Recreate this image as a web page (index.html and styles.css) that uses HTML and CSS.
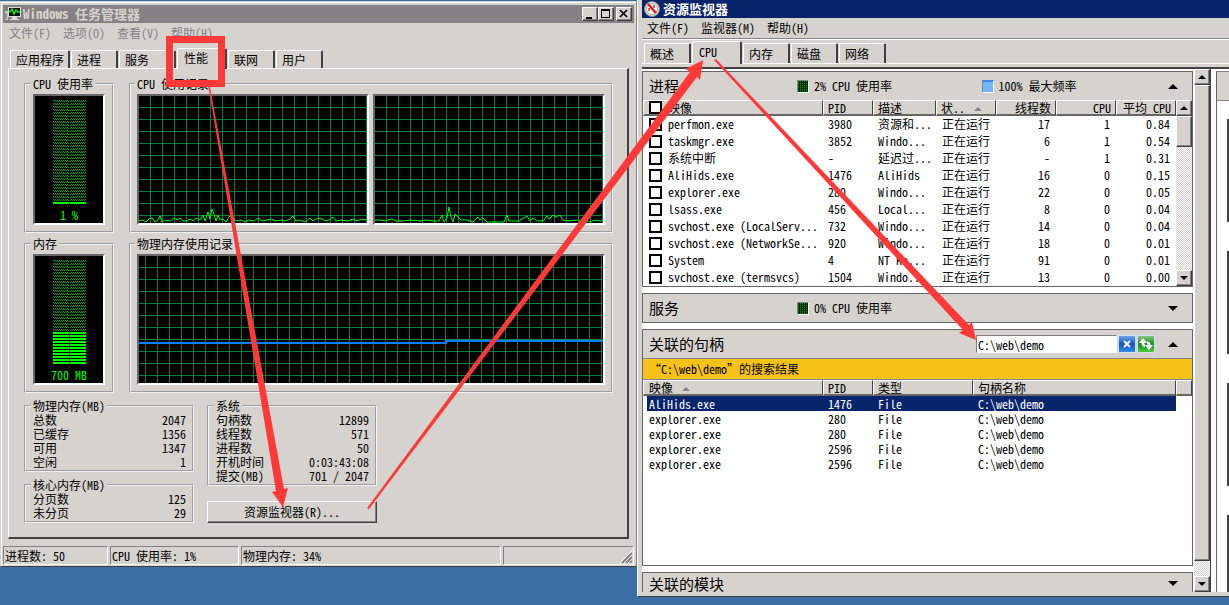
FILE: index.html
```html
<!DOCTYPE html>
<html lang="zh-CN">
<head>
<meta charset="utf-8">
<title>资源监视器</title>
<link rel="stylesheet" href="styles.css">
</head>
<body>
<main class="desktop">
  <section class="window taskmgr">
    <header class="titlebar inactive">
      <svg class="app-icon" width="16" height="16" viewBox="0 0 16 16"><path d="M0 5h3v9H0z" fill="#c8c8c0"/><path d="M1 7v6" stroke="#666"/><rect x="3.500" y="1.500" width="12" height="9" fill="#111" stroke="#ddd"/><path d="M4 6l2-1 1-2 2 5 2-4 2 2h2" fill="none" stroke="#0e0" stroke-width="1.500"/><path d="M7 11h5v2h2v1H5v-1h2z" fill="#ddd"/></svg>
      <h1>Windows 任务管理器</h1>
      <div class="win-buttons">
        <button aria-label="最小化"><svg width="12" height="12"><path d="M2 9h6v2H2z"/></svg></button><button aria-label="最大化"><svg width="12" height="12"><path d="M1 1h9v9H1zM2 3v6h7V3z" fill-rule="evenodd"/></svg></button><button class="close" aria-label="关闭"><svg width="12" height="12"><path d="M2 2l7 7M9 2l-7 7" stroke="#000" stroke-width="1.700"/></svg></button>
      </div>
    </header>
    <nav class="menu muted"><a>文件(F)</a><a>选项(O)</a><a>查看(V)</a><a>帮助(H)</a></nav>
    <div class="tabs">
      <button class="tab w60">应用程序</button><button class="tab w47">进程</button><button class="tab w57">服务</button><button class="tab w50 selected">性能</button><button class="tab w47">联网</button><button class="tab w47">用户</button>
    </div>
    <div class="panel">
      <div class="usage">
        <fieldset class="meter-box"><legend>CPU 使用率</legend>
          <div class="meter">
            <svg width="33" height="105" shape-rendering="crispEdges">
              <defs><pattern id="dim" width="2" height="3" patternUnits="userSpaceOnUse"><path d="M0 0h1v1H0zM1 1h1v1H1z" fill="#00a800"/></pattern>
              <pattern id="lit" width="3" height="3" patternUnits="userSpaceOnUse"><path d="M0 0h3v2H0z" fill="#0f0"/></pattern></defs>
              <path d="M0 0h16v101H0zM17 0h16v101H17z" fill="url(#dim)"/><path d="M0 102h16v2H0zM17 102h16v2H17z" fill="#0f0"/>
            </svg><span>1 %</span>
          </div>
        </fieldset>
        <fieldset class="chart-box"><legend>CPU 使用记录</legend>
          <div class="charts">
            <svg class="chart" height="127">
              <defs><pattern id="grid" width="12" height="12" patternUnits="userSpaceOnUse" x="11" y="11"><path d="M0 0h12v1H1v11H0z" fill="#008040" shape-rendering="crispEdges"/></pattern></defs>
              <rect width="100%" height="100%" fill="url(#grid)"/>
              <polyline class="trace" points="0,125 4,124 7,126 10,123 13,122 16,126 19,124 21,120 23,126 27,124 31,125 35,122 38,124 41,122 44,125 48,125 51,123 54,125 57,122 61,124 64,119 66,125 69,116 71,123 73,113 75,118 77,125 79,119 81,124 84,123 87,126 90,121 93,118 95,123 98,125 102,124 106,126 110,124 115,125 119,122 123,125 128,124 132,123 137,125 142,124 146,125 151,123 154,120 157,125 161,124 166,126 171,122 174,125 179,122 183,123 186,125 190,124 194,121 197,125 202,124 208,125 214,123 218,125 223,123 228,124 232,124"/>
            </svg>
            <svg class="chart" height="127">
              <rect width="100%" height="100%" fill="url(#grid)"/>
              <polyline class="trace" points="0,124 6,124 9,125 13,124 17,123 21,125 29,125 35,124 45,125 52,124 58,125 64,125 67,119 69,126 72,122 74,111 76,121 78,126 80,118 83,121 86,124 92,124 98,126 103,121 105,124 108,122 112,126 129,126 132,119 134,125 143,125 147,123 152,120 155,125 158,122 162,125 168,125 172,120 174,123 178,119 181,121 185,119 188,124 194,125 201,124 210,125 214,126 220,124 225,125 232,124"/>
            </svg>
          </div>
        </fieldset>
        <fieldset class="meter-box"><legend>内存</legend>
          <div class="meter">
            <svg width="33" height="105" shape-rendering="crispEdges"><path d="M0 0h16v71H0zM17 0h16v71H17z" fill="url(#dim)"/><path d="M0 72h16v32H0zM17 72h16v32H17z" fill="url(#lit)"/></svg><span>700 MB</span>
          </div>
        </fieldset>
        <fieldset class="chart-box"><legend>物理内存使用记录</legend>
          <div class="charts">
            <svg class="chart" height="127">
              <defs><pattern id="grid2" width="12" height="12" patternUnits="userSpaceOnUse" x="6" y="11"><path d="M0 0h12v1H1v11H0z" fill="#008040" shape-rendering="crispEdges"/></pattern></defs>
              <rect width="100%" height="100%" fill="url(#grid2)"/>
              <polyline points="0,87 307,87 307,85 2000,85" fill="none" stroke="#0080ff" stroke-width="2" shape-rendering="crispEdges"/>
            </svg>
          </div>
        </fieldset>
      </div>
      <div class="stats">
        <div class="stat-col">
          <fieldset><legend>物理内存(MB)</legend><dl>
            <div><dt>总数</dt><dd>2047</dd></div><div><dt>已缓存</dt><dd>1356</dd></div><div><dt>可用</dt><dd>1347</dd></div><div><dt>空闲</dt><dd>1</dd></div></dl></fieldset>
          <fieldset><legend>核心内存(MB)</legend><dl><div><dt>分页数</dt><dd>125</dd></div><div><dt>未分页</dt><dd>29</dd></div></dl></fieldset>
        </div>
        <div class="stat-col wide-gap">
          <fieldset><legend>系统</legend><dl>
            <div><dt>句柄数</dt><dd>12899</dd></div><div><dt>线程数</dt><dd>571</dd></div><div><dt>进程数</dt><dd>50</dd></div><div><dt>开机时间</dt><dd>0:03:43:08</dd></div><div><dt>提交(MB)</dt><dd>701 / 2047</dd></div></dl></fieldset>
          <button class="push">资源监视器(R)...</button>
        </div>
      </div>
    </div>
    <footer class="status">
      <span>进程数: 50</span><span>CPU 使用率: 1%</span><span>物理内存: 34%</span>
      <span><svg width="12" height="12"><path d="M0 12L12 0M4 12l8-8M8 12l4-4" stroke="#fff" stroke-width="1"/><path d="M2 12L12 2M6 12l6-6M10 12l2-2" stroke="#848284" stroke-width="2"/></svg></span>
    </footer>
  </section>

  <section class="resmon">
    <header class="titlebar">
      <svg class="app-icon" width="16" height="16" viewBox="0 0 16 16"><circle cx="8" cy="8" r="7.500" fill="#ddd" stroke="#888"/><circle cx="8" cy="8" r="5.500" fill="#fff" stroke="#b9a9a9"/><path d="M4 3l8 9" stroke="#e01818" stroke-width="2.500"/><path d="M5 7v3M10 4v3" stroke="#c33" stroke-width="1.500"/></svg>
      <h1>资源监视器</h1>
    </header>
    <nav class="menu"><a>文件(F)</a><a>监视器(M)</a><a>帮助(H)</a></nav>
    <div class="tabs">
      <button class="tab w47">概述</button><button class="tab w50 selected">CPU</button><button class="tab w47">内存</button><button class="tab w47">磁盘</button><button class="tab w47">网络</button>
    </div>
    <div class="content">
      <div class="sections">
        <section class="box">
          <header class="bar"><h2>进程</h2><span class="metric"><i class="swatch green"></i>2% CPU 使用率</span><span class="metric"><i class="swatch blue"></i>100% 最大频率</span><button class="fold" aria-label="折叠"><i class="up"></i></button></header>
          <div class="scroll-area">
            <table class="processes">
              <colgroup><col class="c-check"><col><col class="c50"><col class="c63"><col class="c60"><col class="c60"><col class="c60"><col class="c60"></colgroup>
              <thead><tr><th class="first"><input type="checkbox" aria-label="全选"></th><th class="joined">映像</th><th>PID</th><th>描述</th><th>状..<i class="sort"></i></th><th class="num">线程数</th><th class="num">CPU</th><th class="num">平均 CPU</th></tr></thead>
              <tbody>
              <tr><td><input type="checkbox" aria-label="perfmon.exe"></td><td>perfmon.exe</td><td>3980</td><td>资源和...</td><td>正在运行</td><td>17</td><td>1</td><td>0.84</td></tr>
              <tr><td><input type="checkbox" aria-label="taskmgr.exe"></td><td>taskmgr.exe</td><td>3852</td><td>Windo...</td><td>正在运行</td><td>6</td><td>1</td><td>0.54</td></tr>
              <tr><td><input type="checkbox" aria-label="系统中断"></td><td>系统中断</td><td>-</td><td>延迟过...</td><td>正在运行</td><td>-</td><td>1</td><td>0.31</td></tr>
              <tr><td><input type="checkbox" aria-label="AliHids.exe"></td><td>AliHids.exe</td><td>1476</td><td>AliHids</td><td>正在运行</td><td>16</td><td>0</td><td>0.15</td></tr>
              <tr><td><input type="checkbox" aria-label="explorer.exe"></td><td>explorer.exe</td><td>280</td><td>Windo...</td><td>正在运行</td><td>22</td><td>0</td><td>0.05</td></tr>
              <tr><td><input type="checkbox" aria-label="lsass.exe"></td><td>lsass.exe</td><td>456</td><td>Local...</td><td>正在运行</td><td>8</td><td>0</td><td>0.04</td></tr>
              <tr><td><input type="checkbox" aria-label="svchost.exe"></td><td>svchost.exe (LocalServ...</td><td>732</td><td>Windo...</td><td>正在运行</td><td>14</td><td>0</td><td>0.04</td></tr>
              <tr><td><input type="checkbox" aria-label="svchost.exe"></td><td>svchost.exe (NetworkSe...</td><td>920</td><td>Windo...</td><td>正在运行</td><td>18</td><td>0</td><td>0.01</td></tr>
              <tr><td><input type="checkbox" aria-label="System"></td><td>System</td><td>4</td><td>NT Ke...</td><td>正在运行</td><td>91</td><td>0</td><td>0.01</td></tr>
              <tr><td><input type="checkbox" aria-label="svchost.exe"></td><td>svchost.exe (termsvcs)</td><td>1504</td><td>Windo...</td><td>正在运行</td><td>13</td><td>0</td><td>0.00</td></tr>
              </tbody>
            </table>
            <div class="scrollbar"><button aria-label="向上"><i class="up small"></i></button><div class="thumb short"></div><button class="end" aria-label="向下"><i class="down small"></i></button></div>
          </div>
        </section>
        <section class="box">
          <header class="bar"><h2>服务</h2><span class="metric"><i class="swatch green"></i>0% CPU 使用率</span><button class="fold" aria-label="展开"><i class="down"></i></button></header>
        </section>
        <section class="box handles-box">
          <header class="bar"><h2>关联的句柄</h2>
            <div class="search"><input type="text" value="C:\web\demo" aria-label="搜索句柄"><button class="clear" aria-label="清除"><svg width="16" height="16"><path d="M5 5l6 6M11 5l-6 6" stroke="#fff" stroke-width="2"/></svg></button><button class="refresh" aria-label="刷新"><svg width="16" height="16" fill="#fff"><path id="bolt" d="M5 2L1 7h2.500q0 3 3.500 4V8.500Q6.200 8 6.200 7H9z"/><use href="#bolt" transform="rotate(180 8 8)"/></svg></button></div>
            <button class="fold" aria-label="折叠"><i class="up"></i></button></header>
          <p class="result">“C:\web\demo”的搜索结果</p>
          <table class="handles">
            <colgroup><col class="c-edge"><col><col class="c50"><col class="c100"><col class="c203"><col class="c16"></colgroup>
            <thead><tr><th class="first"></th><th class="joined">映像<i class="sort"></i></th><th>PID</th><th>类型</th><th>句柄名称</th><th></th></tr></thead>
            <tbody>
            <tr class="active"><td></td><td>AliHids.exe</td><td>1476</td><td>File</td><td>C:\web\demo</td><td></td></tr>
            <tr><td></td><td>explorer.exe</td><td>280</td><td>File</td><td>C:\web\demo</td><td></td></tr>
            <tr><td></td><td>explorer.exe</td><td>280</td><td>File</td><td>C:\web\demo</td><td></td></tr>
            <tr><td></td><td>explorer.exe</td><td>2596</td><td>File</td><td>C:\web\demo</td><td></td></tr>
            <tr><td></td><td>explorer.exe</td><td>2596</td><td>File</td><td>C:\web\demo</td><td></td></tr>
            </tbody>
          </table>
        </section>
        <section class="box cut">
          <header class="bar"><h2>关联的模块</h2><button class="fold" aria-label="展开"><i class="down"></i></button></header>
        </section>
      </div>
      <div class="scrollbar main-scroll"><button aria-label="向上"><i class="up small"></i></button><div class="thumb long"></div><button class="end" aria-label="向下"><i class="down small"></i></button></div>
      <aside class="graphs"><div class="graph-head"></div><div class="graph"></div><div class="graph"></div><div class="graph"></div><div class="graph"></div></aside>
    </div>
  </section>

  <svg class="notes" viewBox="0 0 1229 605" preserveAspectRatio="none">
    <rect x="169.500" y="39.500" width="52" height="44" fill="none" stroke="#ff3838" stroke-width="7"/>
    <g fill="#ff3838"><path d="M208.500 87L210 87L284 489L288 488L283 507L272 492L276 491z"/><path d="M367 508L690 72L686 69L703 60L700 80L697 77L369 509z"/><path d="M714 60L716 59L969 325L972 322L976 340L959 333L963 330z"/></g>
  </svg>
</main>
</body>
</html>
```
FILE: styles.css
```css
* { box-sizing: border-box; }

body {
  margin: 0;
  background: #3a6ea5;
  color: #000;
  font: 12px/14px "Noto Sans Mono CJK SC", "Liberation Sans", "Noto Sans CJK SC", sans-serif;
}

button, input { font: inherit; color: inherit; margin: 0; padding: 0; }
button { background: #d6d3ce; border: 0; }
h1, h2, p, dl, dd { margin: 0; font-weight: normal; }
svg { display: block; }

.desktop {
  position: relative;
  display: grid;
  grid-template-columns: 637fr 592fr;
  align-items: start;
  min-height: 100vh;
  overflow: hidden;
}

.window, .resmon { background: #d6d3ce; min-width: 0; }

.taskmgr {
  margin-top: 1px;
  padding: 3px 2px 1px 2px;
  border: 1px solid;
  border-color: #d6d3ce #848284 #424142 #d6d3ce;
  box-shadow: inset 1px 1px 0 #fff;
}

.titlebar {
  display: flex;
  align-items: center;
  gap: 3px;
  height: 18px;
  padding: 0 2px;
  background: #08246b;
  color: #fff;
}
.titlebar.inactive { background: #848284; color: #d6d3ce; gap: 2px; }
.titlebar h1 { font-size: 13px; line-height: 18px; font-weight: bold; white-space: nowrap; }
.win-buttons { display: flex; margin-left: auto; }
.win-buttons button { width: 16px; height: 14px; padding: 0 0 0 1px; }
.win-buttons .close { margin-left: 2px; }
.win-buttons button, .push, .scrollbar button, .thumb {
  border: 1px solid;
  border-color: #fff #424142 #424142 #fff;
  box-shadow: inset -1px -1px 0 #848284;
}

.menu { display: flex; align-items: center; gap: 12px; height: 22px; padding: 0 6px; }
.menu.muted { color: #848284; padding-bottom: 3px; }

.tabs { display: flex; align-items: flex-end; gap: 1px; height: 23px; padding: 0 7px; }
.tab {
  height: 18px;
  padding: 0 5px;
  text-align: left;
  white-space: nowrap;
  border: solid;
  border-width: 1px 2px 0 1px;
  border-color: #fff #424142 #fff #fff;
  border-radius: 2px 2px 0 0;
}
.tab.selected { position: relative; z-index: 1; height: 21px; margin-bottom: -1px; padding-bottom: 2px; padding-left: 6px; }
.w47 { width: 47px; }
.w50 { width: 50px; }
.w57 { width: 57px; }
.w60 { width: 60px; }

.panel {
  margin: 0 5px;
  padding: 8px 14px 14px 15px;
  border: solid;
  border-width: 1px 2px 2px 1px;
  border-color: #fff #424142 #424142 #fff;
}
.usage { display: grid; grid-template-columns: 90px 1fr; gap: 4px 15px; }
fieldset { min-width: 0; margin: 0; padding: 0 6px 1px 7px; border: 2px groove #f2f2f2; }
legend { margin-left: -2px; padding: 0 2px; line-height: 14px; }
.meter-box { padding: 3px 7px 6px; }
.chart-box { padding: 3px 6px 6px; }
.meter {
  display: flex;
  flex-direction: column;
  align-items: center;
  gap: 3px;
  height: 131px;
  padding-top: 4px;
  color: #0f0;
}
.meter, .chart { background: #000; border: 2px solid; border-color: #666 #fff #fff #666; }
.charts { display: flex; gap: 4px; }
.chart { flex: 1; min-width: 0; width: 0; height: 131px; }
.trace { fill: none; stroke: #0f0; stroke-width: 1; }

.stats { display: flex; gap: 13px; margin-top: 6px; }
.stat-col { display: flex; flex-direction: column; justify-content: space-between; width: 170px; }
.wide-gap { gap: 15px; }
.stats dl div { display: flex; justify-content: space-between; }
.push { height: 22px; }

.status { display: grid; grid-template-columns: 105px 129px 260px 1fr; gap: 2px; margin-top: 7px; }
.status span { height: 19px; padding: 2px 1px; border: 1px solid; border-color: #848284 #fff #fff #848284; }
.status svg { margin: 2px 0 0 auto; }

.resmon {
  position: relative;
  padding: 0 0 4px 4px;
  border-left: 1px solid #fff;
  border-bottom: 1px solid #424142;
}
.resmon .menu { height: 21px; padding-left: 5px; border-bottom: 1px solid #848284; }
.resmon .tabs { height: 25px; padding: 0 2px; border-top: 1px solid #fff; border-bottom: 1px solid #fff; }
.resmon .tab { height: 20px; }
.resmon .tab.selected { height: 23px; }
.content {
  display: flex;
  margin-top: 3px;
  height: 525px;
  background: #fff;
  border-top: 2px solid #424142;
}
.sections { flex: 1; min-width: 0; display: flex; flex-direction: column; gap: 6px; padding: 2px 1px 0 0; overflow: hidden; }
.box { flex: none; background: #fff; border: 1px solid #666; }
.bar { display: flex; align-items: center; height: 28px; padding: 0 12px 0 6px; background: #d6d3ce; }
.bar h2 { font-size: 15px; line-height: 26px; width: 148px; flex: none; }
.metric { display: flex; align-items: center; gap: 5px; width: 185px; }
.swatch { width: 12px; height: 13px; border: 1px solid; border-color: #848284 #fff #fff #848284; }
.swatch.green { background: repeating-linear-gradient(90deg, transparent 0 1px, #021 1px 2px), repeating-linear-gradient(#0a8a0a 0 1px, #064806 1px 2px); }
.swatch.blue { background: #73b6ff; border-top: 2px solid #4a86e8; }
.fold { display: grid; place-items: center; width: 14px; height: 14px; margin-left: auto; }
.up, .down, .sort { display: block; width: 0; height: 0; border: 5px solid transparent; border-top-width: 0; border-bottom: 5px solid #000; }
.down { border-top: 5px solid #000; border-bottom-width: 0; }
.up.small { border-width: 0 4px 4px; }
.down.small { border-width: 4px 4px 0; }
.sort { display: inline-block; margin-left: 9px; vertical-align: 2px; border-width: 0 4px 4px; border-bottom-color: #848284; }

table { table-layout: fixed; width: 100%; border-collapse: separate; border-spacing: 0; }
.c-check { width: 20px; }
.c-edge { width: 4px; }
.c16 { width: 16px; }
.c50 { width: 50px; }
.c60 { width: 60px; }
.c63 { width: 63px; }
.c100 { width: 100px; }
.c203 { width: 203px; }
th, td { padding: 0 6px 0 5px; text-align: left; font-weight: normal; white-space: nowrap; overflow: hidden; }
th {
  height: 16px;
  padding-left: 4px;
  line-height: 13px;
  background: #d6d3ce;
  border: solid;
  border-width: 1px 1px 2px;
  border-color: #fff #424142 #666 #fff;
}
th.first { border-right: 0; padding: 0; }
th.joined { border-left: 0; }
.processes { flex: 1; min-width: 0; }
.processes td { height: 17px; line-height: 15px; vertical-align: top; }
.processes td:first-child { padding: 2px 0 0 6px; }
.processes th.first { padding-left: 5px; }
.processes td:nth-child(2), .processes th:nth-child(2) { padding-left: 5px; padding-right: 0; }
.processes td:nth-child(5) { padding-left: 6px; }
.num, .processes td:nth-child(n+6) { text-align: right; }
.num { padding-right: 4px; }
input[type="checkbox"] { display: block; appearance: none; width: 13px; height: 13px; border: 2px solid #000; background: #fff; }

.scroll-area { display: flex; }
.scrollbar {
  display: flex;
  flex-direction: column;
  width: 16px;
  background: repeating-conic-gradient(#d6d3ce 0 25%, #fff 0 50%) 0 0 / 2px 2px;
}
.scrollbar button { display: grid; place-items: center; width: 16px; height: 16px; flex: none; }
.scrollbar .end { margin-top: auto; }
.thumb { background: #d6d3ce; }
.thumb.short { height: 31px; }
.thumb.long { flex: none; height: 476px; }

.search { display: flex; gap: 1px; margin-left: 179px; }
.search input { width: 141px; height: 18px; padding: 0 1px; border: 1px solid; border-color: #848284 #fff #fff #848284; background: #fff; border-radius: 0; }
.search button { width: 18px; height: 18px; padding: 0; border: 1px solid #d0e0f0; }
.search .clear { background: linear-gradient(#6ea8e8, #1450c8 50%, #3090e8); }
.search .refresh { background: linear-gradient(#80c880, #169020 50%, #50c840); }
.handles-box { height: 237px; }
.result { height: 22px; padding-left: 6px; line-height: 20px; background: #f7c218; border: solid #848284; border-width: 1px 0; }
.handles td { height: 15px; line-height: 15px; }
.handles td:nth-child(2), .handles th:nth-child(2) { padding-left: 2px; }
.active td:not(:first-child):not(:last-child) { background: #08246b; color: #fff; }
.box.cut { border-bottom: 0; }
.box.cut .bar { height: 21px; }
.box.cut h2 { line-height: 20px; }

.main-scroll { box-sizing: content-box; border-right: 1px solid #424142; }
.graphs { flex: none; width: 13px; margin: 2px 0 0 5px; border-left: 1px solid #666; overflow: hidden; }
.graph-head { height: 30px; margin-bottom: 18px; background: #d6d3ce; border: solid #848284; border-width: 1px 0; }
.graph { height: 103px; margin: 0 0 29px 10px; border-left: 2px solid #424142; }

.notes { position: absolute; top: 0; left: 0; width: 100%; height: 605px; z-index: 3; pointer-events: none; }
```
